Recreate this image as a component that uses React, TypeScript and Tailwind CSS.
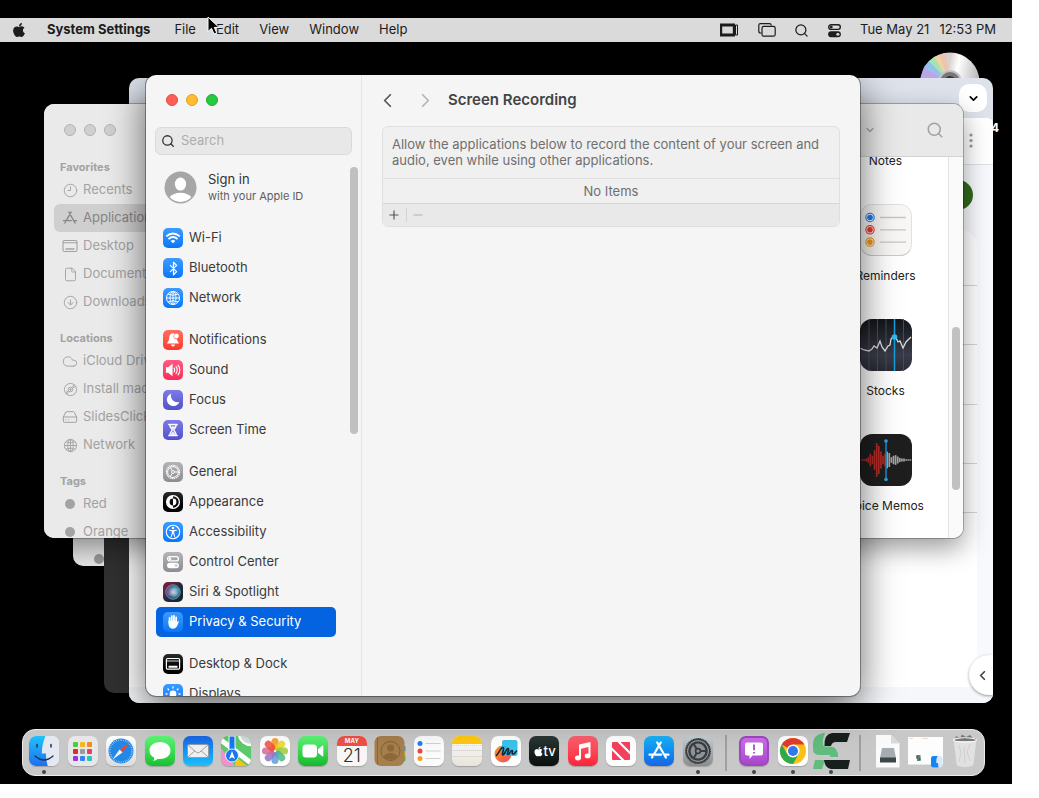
import type { ReactNode } from 'react';
import { FaApple } from 'react-icons/fa';
import {
  Bluetooth,
  ChevronDown,
  ChevronLeft,
  ChevronRight,
  CircleArrowDown,
  Clock9,
  Cloud,
  File,
  HardDrive,
  Minus,
  Plus,
  Search,
} from 'lucide-react';

type Row = { label: string; icon: ReactNode; tile?: string };

const blue = 'bg-linear-to-b from-[#3b9bff] to-[#0477f8]';
const gray = 'bg-linear-to-b from-[#b4b4b8] to-[#8c8c91]';
const black = 'bg-linear-to-b from-[#2c2c2c] to-[#000000]';
const indigo = 'bg-linear-to-b from-[#7d7be8] to-[#5350cc]';

function GlobeIcon({ size = 16, width = 1 }: { size?: number; width?: number }) {
  return (
    <svg width={size} height={size} viewBox="0 0 16 16" fill="none" stroke="currentColor" strokeWidth={width}>
      <circle cx="8" cy="8" r="6.5" />
      <ellipse cx="8" cy="8" rx="3" ry="6.5" />
      <path d="M8 1.5v13M1.5 8h13M3 4q5 2.6 10 0M3 12q5-2.6 10 0" />
    </svg>
  );
}

function ToggleIcon({ size }: { size: number }) {
  return (
    <svg width={size} height={size} viewBox="0 0 16 16" fill="none" stroke="currentColor" strokeWidth="1.5">
      <rect x="1.8" y="1.8" width="12.4" height="5" rx="2.5" />
      <circle cx="4.6" cy="4.3" r="1.5" fill="currentColor" stroke="none" />
      <rect x="1.2" y="8.9" width="13.6" height="6.2" rx="3.1" fill="currentColor" stroke="none" />
      <circle cx="11.6" cy="12" r="1.7" fill="#cfcfcf" stroke="none" />
    </svg>
  );
}

function GearIcon() {
  return (
    <svg width="16" height="16" viewBox="0 0 16 16" fill="none" stroke="white">
      <circle cx="8" cy="8" r="6.6" strokeWidth="1.2" strokeDasharray="1.4 0.67" />
      <circle cx="8" cy="8" r="5.4" strokeWidth="1" />
      <circle cx="8" cy="8" r="1.5" strokeWidth="0.9" />
      <path d="M9.5 8h4M7.2 6.7L5.3 3.4M7.2 9.3l-1.9 3.3" strokeWidth="1" />
    </svg>
  );
}

const groups: Row[][] = [
  [
    {
      label: 'Wi-Fi',
      tile: blue,
      icon: (
        <svg width="16" height="16" viewBox="0 0 16 16" fill="none" stroke="white" strokeWidth="1.9">
          <path d="M1.2 6.4Q8 .4 14.800 6.400M3.500 9Q8 5.200 12.500 9" />
          <path d="M8 13.300L5.600 10.900Q8 9 10.400 10.900Z" fill="white" stroke="none" />
        </svg>
      ),
    },
    { label: 'Bluetooth', tile: blue, icon: <Bluetooth size={15} strokeWidth={2} /> },
    { label: 'Network', tile: blue, icon: <GlobeIcon /> },
  ],
  [
    {
      label: 'Notifications',
      tile: 'bg-linear-to-b from-[#ff6d5f] to-[#fb382c]',
      icon: (
        <svg width="18" height="18" viewBox="0 0 18 18" fill="white">
          <path d="M9 2.3C6.6 2.3 5.4 4 5.3 6.3C5.2 9 4.7 10 3.3 11.7Q2.9 12.6 3.8 12.6H14.2Q15.1 12.6 14.7 11.7C13.8 10.6 13.2 9.6 13 8.2A3.1 3.1 0 0 1 10 3.4Q10.2 2.9 10.4 2.6Z" />
          <path d="M7 13.5h4a2 2 0 0 1-4 0z" />
          <circle cx="12.4" cy="5" r="2.4" />
        </svg>
      ),
    },
    {
      label: 'Sound',
      tile: 'bg-linear-to-b from-[#ff5a83] to-[#fb2a56]',
      icon: (
        <svg width="18" height="18" viewBox="0 0 18 18" fill="none" stroke="white" strokeWidth="1.1" strokeLinecap="round">
          <path d="M2.5 6.8H4.5L8 4V14L4.5 11.2H2.5Z" fill="white" />
          <path d="M10 7.2q1.4 1.8 0 3.6M12 5.7q2.5 3.3 0 6.6M14 4.2q3.7 4.8 0 9.6" />
        </svg>
      ),
    },
    {
      label: 'Focus',
      tile: indigo,
      icon: (
        <svg width="18" height="18" viewBox="0 0 18 18" fill="white">
          <path d="M7.4 2.6A6.4 6.4 0 1 0 15.3 11A6.4 6.4 0 0 1 7.4 2.6Z" />
        </svg>
      ),
    },
    {
      label: 'Screen Time',
      tile: indigo,
      icon: (
        <svg width="18" height="18" viewBox="0 0 18 18" fill="none" stroke="white" strokeWidth="1.4">
          <path d="M4.8 3.5h8.4M4.8 14.5h8.4" strokeLinecap="round" />
          <path d="M5.8 3.5C5.8 7 8.2 7.5 8.2 9S5.8 11 5.8 14.5M12.2 3.5C12.2 7 9.8 7.5 9.8 9S12.2 11 12.2 14.5" />
          <path d="M7.5 5.8h3L9 8zM7 13.5L9 11l2 2.5z" fill="white" strokeWidth="0.6" />
        </svg>
      ),
    },
  ],
  [
    { label: 'General', tile: gray, icon: <GearIcon /> },
    {
      label: 'Appearance',
      tile: black,
      icon: (
        <svg width="16" height="16" viewBox="0 0 16 16">
          <path d="M8 1.8A6.2 6.2 0 0 0 8 14.2V11.4A3.4 3.4 0 0 1 8 4.6Z" fill="white" />
          <path d="M8 4.6A3.4 3.4 0 0 1 8 11.4Z" fill="white" />
          <circle cx="8" cy="8" r="6.4" fill="none" stroke="white" strokeWidth="1.3" />
        </svg>
      ),
    },
    {
      label: 'Accessibility',
      tile: blue,
      icon: (
        <svg width="16" height="16" viewBox="0 0 16 16" fill="none" stroke="white" strokeLinecap="round">
          <circle cx="8" cy="8" r="6.7" strokeWidth="1.1" />
          <circle cx="8" cy="4" r="1.2" fill="white" stroke="none" />
          <path d="M4.7 6.3L8 6.9l3.3-.6M8 7v2M7.4 7v2.2L6.3 12.4M8.6 7v2.2l1.1 3.2" strokeWidth="1.1" />
        </svg>
      ),
    },
    { label: 'Control Center', tile: gray, icon: <ToggleIcon size={14} /> },
    {
      label: 'Siri & Spotlight',
      tile: 'bg-linear-to-br from-[#8c0f3e] via-[#27283f] to-[#05282a]',
      icon: (
        <svg width="18" height="18" viewBox="0 0 18 18">
          <defs>
            <radialGradient id="siri" cx="0.58" cy="0.52" r="0.55">
              <stop offset="0" stopColor="#ffffff" />
              <stop offset="0.3" stopColor="#a9def0" />
              <stop offset="0.65" stopColor="#3b88b0" />
              <stop offset="1" stopColor="#4c4a88" />
            </radialGradient>
          </defs>
          <path d="M2 9A7 7 0 0 1 7 2.3Q9 5 10 9L6 13Q3 12 2 9Z" fill="#e03a72" />
          <path d="M8 2Q15 3 16 9Q12 6 9 7Z" fill="#26b892" />
          <circle cx="9" cy="9" r="7.3" fill="url(#siri)" opacity="0.75" />
          <circle cx="9" cy="9" r="7.3" fill="none" stroke="#9aa8b4" strokeWidth="0.6" />
        </svg>
      ),
    },
    {
      label: 'Privacy & Security',
      tile: blue,
      icon: (
        <svg width="18" height="18" viewBox="0 0 18 18" fill="white" stroke="white" strokeLinecap="round">
          <path d="M5.6 5v5M7.8 3.2v6M10 2.8v6M12.2 4.3v6" strokeWidth="1.8" />
          <path d="M4.7 8H13V9.5L14.4 8.3Q15 8.6 14.400 9.400L12.700 13.400Q11.500 15.500 9 15.500Q4.700 15.500 4.700 10.500Z" strokeWidth="0.4" />
        </svg>
      ),
    },
  ],
  [
    {
      label: 'Desktop & Dock',
      tile: black,
      icon: (
        <svg width="16" height="16" viewBox="0 0 16 16" fill="none" stroke="white" strokeWidth="1.2">
          <rect x="1.4" y="2.5" width="13.2" height="10.6" rx="1.2" />
          <path d="M1.5 5h13" strokeWidth="0.8" />
          <path d="M3.5 10.8h9" strokeWidth="2" />
        </svg>
      ),
    },
    {
      label: 'Displays',
      tile: blue,
      icon: (
        <svg width="18" height="18" viewBox="0 0 18 18" stroke="white" strokeWidth="1.3" strokeLinecap="round">
          <circle cx="9" cy="9" r="3.4" fill="white" stroke="none" />
          <path d="M9 2v1M9 15v1M2 9h1M15 9h1M4 4l.7.7M13.3 13.3l.7.7M14 4l-.7.7M4.7 13.3l-.7.7" />
        </svg>
      ),
    },
  ],
];

const tagDot = <span className="size-2.5 rounded-full bg-[#a3a3a3]" />;

const finderGroups: { title: string; rows: (Row & { selected?: boolean })[] }[] = [
  {
    title: 'Favorites',
    rows: [
      { label: 'Recents', icon: <Clock9 size={15} strokeWidth={1.5} /> },
      {
        label: 'Applications',
        selected: true,
        icon: (
          <svg width="16" height="16" viewBox="0 0 16 16" fill="none" stroke="currentColor" strokeWidth="1.4" strokeLinecap="round">
            <path d="M9.2 2L4.2 10.7M2.9 12.9l.5-.9M6.8 2l6.3 11M1.5 10.6h7.8M12.2 10.6h2.3" />
          </svg>
        ),
      },
      {
        label: 'Desktop',
        icon: (
          <svg width="16" height="16" viewBox="0 0 16 16" fill="none" stroke="currentColor" strokeWidth="1.1">
            <rect x="1" y="2.5" width="14" height="11" rx="1.5" />
            <path d="M1 4.8h14" />
            <path d="M3.5 11h9" strokeWidth="1.7" />
          </svg>
        ),
      },
      { label: 'Documents', icon: <File size={15} strokeWidth={1.5} /> },
      { label: 'Downloads', icon: <CircleArrowDown size={15} strokeWidth={1.5} /> },
    ],
  },
  {
    title: 'Locations',
    rows: [
      { label: 'iCloud Drive', icon: <Cloud size={17} strokeWidth={1.4} /> },
      {
        label: 'Install macOS',
        icon: (
          <svg width="15" height="15" viewBox="0 0 16 16" fill="none" stroke="currentColor" strokeWidth="1">
            <circle cx="8" cy="8" r="6.5" />
            <circle cx="8" cy="8" r="2.4" />
            <circle cx="8" cy="8" r="0.7" fill="currentColor" />
            <path d="M9.600 6L12 2.800M10.200 6.800L13.300 4.300M6.400 10L4 13.200M5.800 9.200L2.700 11.700" />
          </svg>
        ),
      },
      { label: 'SlidesClicker', icon: <HardDrive size={16} strokeWidth={1.5} /> },
      { label: 'Network', icon: <GlobeIcon size={15} /> },
    ],
  },
  {
    title: 'Tags',
    rows: [
      { label: 'Red', icon: tagDot },
      { label: 'Orange', icon: tagDot },
    ],
  },
];

function MenuBar() {
  return (
    <header className="flex h-6 items-center justify-between bg-[#dadada] pr-4 pl-[11px] text-[13px] text-[#1c1c1c]">
      <nav className="flex items-center gap-5">
        <button aria-label="Apple menu">
          <FaApple size={16} />
        </button>
        <button className="mr-1 font-bold">System Settings</button>
        {['File', 'Edit', 'View', 'Window', 'Help'].map((item) => (
          <button key={item}>{item}</button>
        ))}
      </nav>
      <div className="flex items-center">
        <svg width="18" height="14" viewBox="0 0 18 14" className="mr-5">
          <path d="M0 .5H15V13.500H0Z" fill="#1c1c1c" />
          <rect x="2.200" y="3.500" width="10.600" height="7" fill="#dadada" />
          <path d="M15.500 2h2v10h-2z" fill="none" stroke="#1c1c1c" strokeWidth="1" />
        </svg>
        <svg width="18" height="14" viewBox="0 0 18 14" className="mr-[18px]" fill="none" stroke="#1c1c1c" strokeWidth="1.2">
          <path d="M3.500 10H2.500Q.8 10 .8 8.300V2.300Q.8.700 2.500.700H11.500Q13.200.700 13.300 2.500" />
          <rect x="4" y="3.400" width="13.200" height="9.800" rx="1.800" />
        </svg>
        <Search size={15} strokeWidth={2} className="mr-[18px]" />
        <div className="mr-[18px]">
          <ToggleIcon size={15} />
        </div>
        <span className="mr-2.5">Tue May 21</span>
        <span>12:53 PM</span>
      </div>
    </header>
  );
}

function FinderApp({ name, children }: { name: string; children?: ReactNode }) {
  return (
    <div className="flex h-[115px] flex-col items-center justify-end gap-3">
      {children}
      <span className="text-[12px] leading-4 text-[#222]">{name}</span>
    </div>
  );
}

const memoBars = [1, 1, 2, 4, 9, 6, 14, 24, 20, 12, 6, 9, 12, 10, 4, 6, 7, 5, 3, 2, 2, 1, 1, 1];

function FinderWindow() {
  return (
    <section
      aria-label="Finder"
      className="absolute top-[86px] left-11 flex h-[434px] w-[919px] overflow-hidden rounded-[10px] bg-white shadow-[0_0_0_1px_rgba(0,0,0,0.25),0_10px_26px_rgba(0,0,0,0.4)]"
    >
      <aside className="w-[150px] shrink-0 bg-[#eaeaea] text-[#a2a2a2]">
        <div className="flex gap-2 px-5 pt-5">
          {['Close', 'Minimize', 'Zoom'].map((label) => (
            <button key={label} aria-label={label} className="size-3 rounded-full border border-[#b3b3b3] bg-[#cfcfcf]" />
          ))}
        </div>
        <div className="pt-[22px]">
          {finderGroups.map((group) => (
            <div key={group.title} className="mb-[13px]">
              <h2 className="h-[18px] pl-4 text-[11px] leading-[18px] font-bold">{group.title}</h2>
              {group.rows.map((row) => (
                <button
                  key={row.label}
                  className={`ml-2.5 flex h-7 w-full items-center rounded-md pl-2 text-[13px] whitespace-nowrap ${
                    row.selected ? 'bg-[#cfcfcf] text-[#858585]' : ''
                  }`}
                >
                  <span className="mr-[5px] flex w-4 shrink-0 justify-center">{row.icon}</span>
                  {row.label}
                </button>
              ))}
            </div>
          ))}
        </div>
      </aside>
      <div className="flex flex-1 flex-col">
        <div className="flex h-[53px] shrink-0 items-center justify-end gap-[50px] border-b border-[#d2d2d2] bg-[#e9e9e9] pr-[19px] text-[#a2a2a2]">
          <button aria-label="Group items">
            <ChevronDown size={12} strokeWidth={2.6} />
          </button>
          <button aria-label="Search">
            <Search size={18} strokeWidth={2} />
          </button>
        </div>
        <div className="flex min-h-0 flex-1 justify-end">
          <div className="mt-[-103px] w-[125px] [clip-path:inset(103px_0_0_0)]">
            <FinderApp name="Notes" />
            <FinderApp name="Reminders">
              <svg width="52" height="52" viewBox="0 0 52 52">
                <rect x="0.500" y="0.500" width="51" height="51" rx="11" fill="#f8f7f6" stroke="#e0e0e0" />
                <path d="M2 46Q5 51.500 12 51.500H40Q47 51.500 50 46" fill="none" stroke="#c9c9c9" />
                {['#1c7cf0', '#ea3b30', '#f09a1a'].map((color, i) => (
                  <g key={color}>
                    <circle cx="10" cy={13.500 + i * 12.300} r="4.200" fill="none" stroke={color} strokeWidth="1.100" />
                    <circle cx="10" cy={13.500 + i * 12.300} r="2.800" fill={color} />
                    <path d={`M20 ${13.500 + i * 12.300}h26`} stroke="#c6c6c6" strokeWidth="1.300" />
                  </g>
                ))}
              </svg>
            </FinderApp>
            <FinderApp name="Stocks">
              <svg width="52" height="52" viewBox="0 0 52 52">
                <defs>
                  <linearGradient id="stocks" x2="0" y2="1">
                    <stop offset="0" stopColor="#14151a" />
                    <stop offset="0.700" stopColor="#393c49" />
                    <stop offset="1" stopColor="#292b34" />
                  </linearGradient>
                </defs>
                <rect width="52" height="52" rx="12" fill="url(#stocks)" />
                <path d="M9 0v52M17.500 0v52M26 0v52M43.500 0v52" stroke="#4a4c55" strokeWidth="1" />
                <path d="M34.500 0v52" stroke="#139fe0" strokeWidth="1.500" />
                <path
                  d="M0 29l4 2 5 1 3-2 2-3 3 2 3-7 2 6 3 4 3-5 2-1 1-6 3-3 2 2 2 4 2-1 3 7 3-6 5-5"
                  fill="none"
                  stroke="#dcdcdc"
                  strokeWidth="1.300"
                />
                <circle cx="34.500" cy="18" r="2.800" fill="#31b8f5" />
              </svg>
            </FinderApp>
            <FinderApp name="Voice Memos">
              <svg width="52" height="52" viewBox="0 0 52 52">
                <rect width="52" height="52" rx="12" fill="#1e1e1e" />
                {memoBars.map((h, i) => (
                  <path
                    key={i}
                    d={`M${2 + i * 2.100} ${26 - h * 0.700}v${h * 1.400}`}
                    stroke={i < 12 ? '#b32d28' : '#a4a4a4'}
                    strokeWidth="1.700"
                  />
                ))}
                <path d="M26 7v39" stroke="#188bd0" strokeWidth="1.500" />
                <circle cx="26" cy="7" r="1.800" fill="#2aa5f0" />
                <circle cx="26" cy="45.500" r="1.800" fill="#2aa5f0" />
              </svg>
            </FinderApp>
          </div>
          <div className="flex w-[15px] justify-center border-l border-[#e4e4e4] bg-[#fafafa] pt-[170px]">
            <div className="h-[163px] w-2 rounded-full bg-[#c1c1c1]" />
          </div>
        </div>
      </div>
    </section>
  );
}

function BrowserWindow() {
  return (
    <section
      aria-label="Browser"
      className="absolute top-[60px] left-[129px] flex h-[625px] w-[864px] flex-col overflow-hidden rounded-[10px] bg-[#dde2eb]"
    >
      <div className="flex h-10 shrink-0 items-center justify-end pr-1.5">
        <button aria-label="Search tabs" className="flex size-7 items-center justify-center rounded-[10px] bg-white text-black">
          <ChevronDown size={13} strokeWidth={3} />
        </button>
      </div>
      <div className="flex h-[47px] shrink-0 items-center justify-end rounded-t-md border-b border-[#dfe1e5] bg-white pr-5">
        <svg width="4" height="16" viewBox="0 0 4 16" fill="#9a9a9a">
          <circle cx="2" cy="2" r="1.600" />
          <circle cx="2" cy="7.500" r="1.600" />
          <circle cx="2" cy="13" r="1.600" />
        </svg>
      </div>
      <div className="flex flex-1 flex-col bg-[#f7f9fc]">
        <div className="flex h-[65px] justify-end pt-[15px] pr-5">
          <span className="size-[30px] rounded-full bg-[#33691e]" />
        </div>
        <div className="mr-4 flex-1 rounded-tr-2xl bg-white pt-[55px]">
          <div className="h-px bg-[#d4d4d4]" />
          <div className="mt-[58px] h-px bg-[#d4d4d4]" />
          <div className="mt-[59px] h-px bg-[#d4d4d4]" />
          <div className="mt-[58px] h-px bg-[#d4d4d4]" />
          <div className="mt-[48px] h-px bg-[#d4d4d4]" />
        </div>
        <div className="h-4 bg-[#f5f7fa]" />
      </div>
      <button
        aria-label="Show side panel"
        className="absolute right-0 bottom-2 flex h-10 w-6 items-center rounded-l-full bg-white pl-1.5 text-[#444] shadow-[0_1px_3px_rgba(0,0,0,0.4)]"
      >
        <ChevronLeft size={15} strokeWidth={2.8} />
      </button>
    </section>
  );
}

function SettingsWindow() {
  return (
    <section
      aria-label="System Settings"
      className="absolute top-[57px] left-[146px] flex h-[621px] w-[714px] overflow-hidden rounded-[10px] bg-[#f5f5f5] shadow-[0_0_0_1px_rgba(0,0,0,0.35),0_12px_38px_rgba(0,0,0,0.6)]"
    >
      <aside className="flex w-[216px] shrink-0 flex-col border-r border-[#e6e6e6]">
        <div className="flex gap-2 px-5 pt-[19px]">
          <button aria-label="Close" className="size-3 rounded-full border border-[#df4a43] bg-[#ff5f57]" />
          <button aria-label="Minimize" className="size-3 rounded-full border border-[#dea02c] bg-[#febc2e]" />
          <button aria-label="Zoom" className="size-3 rounded-full border border-[#1faa32] bg-[#28c840]" />
        </div>
        <label className="mx-[9px] mt-[21px] flex h-7 items-center gap-1.5 rounded-md border border-[#dadada] bg-[#e8e8e8] px-[5px]">
          <Search size={14} strokeWidth={2.2} className="shrink-0 text-[#333]" />
          <input
            type="search"
            aria-label="Search"
            placeholder="Search"
            className="w-full min-w-0 bg-transparent text-[13px] outline-none placeholder:text-[#adadad]"
          />
        </label>
        <div className="flex min-h-0 flex-1 justify-between pt-3 pr-[3px]">
          <div className="w-[190px] overflow-hidden pl-2.5">
            <button className="flex h-10 items-center gap-[11px] pl-2 text-left">
              <svg width="33" height="33" viewBox="0 0 32 32">
                <circle cx="16" cy="16" r="15.500" fill="#a6a6a6" />
                <ellipse cx="16" cy="12.700" rx="5.500" ry="6.300" fill="white" />
                <path d="M5.500 25.500Q9 21 16 21T26.500 25.500Q22 30 16 30T5.500 25.500Z" fill="white" />
              </svg>
              <span>
                <span className="block text-[13px] leading-[17px] text-[#333]">Sign in</span>
                <span className="block text-[11px] leading-4 text-[#5e5e5e]">with your Apple ID</span>
              </span>
            </button>
            <nav className="mt-4 flex flex-col gap-3">
              {groups.map((group, i) => (
                <div key={i}>
                  {group.map((row) => {
                    const selected = row.label === 'Privacy & Security';
                    return (
                      <button
                        key={row.label}
                        className={`flex h-[30px] w-full items-center gap-1.5 rounded-[5px] pl-[7px] text-[13px] ${
                          selected ? 'bg-[#0463e1] text-white' : 'text-[#3a3a3a]'
                        }`}
                      >
                        <span className={`flex size-5 shrink-0 items-center justify-center rounded-[5px] text-white ${row.tile}`}>
                          {row.icon}
                        </span>
                        {row.label}
                      </button>
                    );
                  })}
                </div>
              ))}
            </nav>
          </div>
          <div className="h-[267px] w-2 rounded-full bg-[#c0c0c0]" />
        </div>
      </aside>
      <main className="flex-1 px-5">
        <div className="flex h-[51px] items-center">
          <button aria-label="Back" className="mr-[15px] ml-[-6px] text-[#555]">
            <ChevronLeft size={23} strokeWidth={1.8} />
          </button>
          <button aria-label="Forward" className="mr-[11px] text-[#b4b4b4]">
            <ChevronRight size={23} strokeWidth={1.8} />
          </button>
          <h1 className="text-[15px] font-semibold text-[#444]">Screen Recording</h1>
        </div>
        <div className="overflow-hidden rounded-md border border-[#dfdfdf] bg-[#f0f0f0] text-[13px] leading-4 text-[#6f6f6f]">
          <p className="px-[9px] pt-[9px] pb-2.5">
            Allow the applications below to record the content of your screen and audio, even while using other applications.
          </p>
          <p className="border-t border-[#e0e0e0] py-1 text-center">No Items</p>
          <div className="flex h-[23px] items-center border-t border-[#d6d6d6] bg-[#e9e9e9]">
            <button aria-label="Add" className="flex w-6 border-r border-[#d4d4d4] pl-1 text-[#555]">
              <Plus size={14} strokeWidth={2} />
            </button>
            <button aria-label="Remove" className="flex w-6 pl-1 text-[#b0b0b0]">
              <Minus size={14} strokeWidth={2} />
            </button>
          </div>
        </div>
      </main>
    </section>
  );
}

function DockItem({ name, open, children }: { name: string; open?: boolean; children: ReactNode }) {
  return (
    <button aria-label={name} className="flex h-full flex-1 flex-col items-center pt-[6px]">
      <span className="flex h-[34px] items-start justify-center">{children}</span>
      {open && <span className="size-1 rounded-full bg-[#444]" />}
    </button>
  );
}

function Tile({ className, children }: { className: string; children?: ReactNode }) {
  return (
    <span
      className={`flex size-[30px] items-center justify-center overflow-hidden rounded-[7px] text-white shadow-[0_1px_1px_rgba(0,0,0,0.2)] ${className}`}
    >
      {children}
    </span>
  );
}

const launchColors = ['#46cf3e', '#f9b61a', '#f38b16', '#e5262c', '#9b9ba0', '#f43a60', '#9b37d8', '#2f86f2', '#25c9b6'];
const petals = ['#f7941d', '#e8d820', '#9fcb3b', '#52b684', '#5b9fd8', '#9475c2', '#d46a9e', '#f0503a'];

function Dock() {
  return (
    <nav
      aria-label="Dock"
      className="mt-auto mr-[27px] mb-2 ml-[22px] flex h-[47px] items-center rounded-[13px] border border-[#ececec] bg-[#c8c8c8] pl-0.5"
    >
      <DockItem name="Finder" open>
        <Tile className="bg-white">
          <svg width="30" height="30" viewBox="0 0 30 30">
            <defs>
              <linearGradient id="finder" x2="0" y2="1">
                <stop offset="0" stopColor="#1fc3fb" />
                <stop offset="1" stopColor="#1d6ff0" />
              </linearGradient>
            </defs>
            <rect width="30" height="30" fill="#e4e9f1" />
            <path d="M0 0H16.500C14 6 13 11 12.800 17.500H17C17 22 17.500 26 18.800 30H0Z" fill="url(#finder)" />
            <path d="M8 8.500v2.500M22 8.500v2.500" stroke="#1d3355" strokeWidth="1.500" strokeLinecap="round" />
            <path d="M6 20Q15 28 24 20" fill="none" stroke="#1d3355" strokeWidth="1.300" strokeLinecap="round" />
          </svg>
        </Tile>
      </DockItem>
      <DockItem name="Launchpad">
        <Tile className="bg-[#e7e7ea]">
          <span className="grid grid-cols-3 gap-0.5">
            {launchColors.map((color) => (
              <span key={color} className="size-[5px] rounded-[1px]" style={{ backgroundColor: color }} />
            ))}
          </span>
        </Tile>
      </DockItem>
      <DockItem name="Safari">
        <Tile className="bg-linear-to-b from-white to-[#dcdcdc]">
          <svg width="28" height="28" viewBox="0 0 28 28">
            <circle cx="14" cy="14" r="12.500" fill="#2188e8" />
            <circle cx="14" cy="14" r="11" fill="none" stroke="#cfe8ff" strokeWidth="1.600" strokeDasharray="0.500 1.300" />
            <path d="M22.500 5.500L12.500 12.500L15.500 15.500Z" fill="#f04438" />
            <path d="M5.500 22.500L12.500 12.500L15.500 15.500Z" fill="#f3f3f3" />
          </svg>
        </Tile>
      </DockItem>
      <DockItem name="Messages">
        <Tile className="bg-linear-to-b from-[#5df777] to-[#0fc22c]">
          <svg width="26" height="24" viewBox="0 0 26 24" fill="white">
            <path d="M13 3C6.500 3 2.500 6.800 2.500 11.500C2.500 15 4.500 17.300 7.300 18.800C7.400 20 6.800 21 6 21.800C8.200 21.800 9.800 20.800 10.800 19.800Q12 20 13 20C19.500 20 23.500 16.200 23.500 11.500S19.500 3 13 3Z" />
          </svg>
        </Tile>
      </DockItem>
      <DockItem name="Mail">
        <Tile className="bg-linear-to-b from-[#1c63e8] to-[#1dc0fa]">
          <svg width="22" height="14" viewBox="0 0 22 14" fill="#f0f0f0" stroke="#92989d" strokeWidth="0.900">
            <rect x="0.500" y="0.500" width="21" height="13" rx="1.500" />
            <path d="M1 13L8.300 6.500M21 13L13.700 6.500" />
            <path d="M1 1L9.500 8.300Q11 9.500 12.500 8.300L21 1" />
          </svg>
        </Tile>
      </DockItem>
      <DockItem name="Maps">
        <Tile className="bg-[#5dcb69]">
          <svg width="30" height="30" viewBox="0 0 30 30">
            <path d="M0 12L14 30H0Z" fill="#f291cf" />
            <path d="M15 21L26 30H14Z" fill="#fac30c" />
            <path d="M0 4L30 27" stroke="white" strokeWidth="5" />
            <path d="M18 0A13 13 0 0 0 30 9V0Z" fill="#d5dadb" />
            <path d="M18 0A13 13 0 0 0 30 9" fill="none" stroke="white" strokeWidth="2.500" />
            <path d="M8 0h6v15H8z" fill="#1778f2" stroke="white" strokeWidth="1" />
            <circle cx="11" cy="19.500" r="6.500" fill="#1778f2" stroke="#e9f4ff" strokeWidth="1" />
            <path d="M11 15L14 23L11 21.300L8 23Z" fill="white" />
          </svg>
        </Tile>
      </DockItem>
      <DockItem name="Photos">
        <Tile className="bg-white">
          <svg width="30" height="30" viewBox="0 0 30 30">
            {petals.map((color, i) => (
              <rect
                key={color}
                x="11.500"
                y="2"
                width="7"
                height="12"
                rx="3.500"
                fill={color}
                opacity="0.850"
                transform={`rotate(${i * 45} 15 15)`}
              />
            ))}
          </svg>
        </Tile>
      </DockItem>
      <DockItem name="FaceTime">
        <Tile className="bg-linear-to-b from-[#5df777] to-[#0fb92a]">
          <svg width="22" height="14" viewBox="0 0 22 14" fill="white">
            <rect x="0.500" y="0.500" width="14.500" height="13" rx="3.500" />
            <path d="M16 5.300L20.200 1.800Q21.300 1.200 21.300 2.500V11.500Q21.300 12.800 20.200 12.200L16 8.700Z" />
          </svg>
        </Tile>
      </DockItem>
      <DockItem name="Calendar">
        <Tile className="flex-col bg-[#f8f7f5]">
          <span className="h-[10px] w-full bg-[#ee5148] text-center text-[6px] leading-[10px] font-bold">MAY</span>
          <span className="text-[18px] leading-5 font-light text-[#2e2e2e]">21</span>
        </Tile>
      </DockItem>
      <DockItem name="Contacts">
        <svg width="32" height="30" viewBox="0 0 32 30">
          <path d="M29 10h2.500v5H29z" fill="#2f9de2" />
          <path d="M29 15h2.500v5H29z" fill="#f4a91f" />
          <path d="M29 20h2.500v5H29z" fill="#56b948" />
          <rect x="0.500" width="30" height="30" rx="6.500" fill="#a67f4c" />
          <path d="M3.500 1v28" stroke="#876437" strokeWidth="0.900" />
          <g fill="#8c693c">
            <circle cx="16.500" cy="15" r="9.500" fill="none" stroke="#80602f" />
            <circle cx="16.500" cy="12" r="3.600" />
            <path d="M9.500 21Q11 17 16.500 17T23.500 21Q20.500 23.700 16.500 23.700T9.500 21Z" />
          </g>
        </svg>
      </DockItem>
      <DockItem name="Reminders">
        <Tile className="bg-[#fbfbfb]">
          <svg width="30" height="30" viewBox="0 0 30 30">
            {['#1f7df5', '#ec463b', '#f29d27'].map((color, i) => (
              <g key={color}>
                <circle cx="6" cy={7.500 + i * 7.500} r="2.500" fill={color} />
                <path d={`M11.500 ${7.500 + i * 7.500}h15`} stroke="#d1d1d1" strokeWidth="1" />
              </g>
            ))}
          </svg>
        </Tile>
      </DockItem>
      <DockItem name="Notes">
        <Tile className="bg-linear-to-b from-white to-[#e8e3da]">
          <svg width="30" height="30" viewBox="0 0 30 30">
            <path d="M0 0h30v8H0z" fill="#fdc913" />
            <path d="M0 9.500h30" stroke="#bbb" strokeDasharray="1 1" strokeWidth="0.500" />
            <path d="M0 14.500h30M0 20.500h30" stroke="#d3d0ca" strokeWidth="0.700" />
          </svg>
        </Tile>
      </DockItem>
      <DockItem name="Freeform">
        <Tile className="bg-white">
          <svg width="30" height="30" viewBox="0 0 30 30">
            <defs>
              <linearGradient id="freeform" x2="1" y2="1">
                <stop offset="0" stopColor="#f99b24" />
                <stop offset="1" stopColor="#f64a55" />
              </linearGradient>
            </defs>
            <circle cx="12" cy="18" r="8.500" fill="url(#freeform)" />
            <rect x="11" y="4" width="15.500" height="16" rx="2" fill="#26bdea" opacity="0.900" />
            <path
              d="M5.500 19.500C8 17 10 11 12 11.500S10 19 12 19S15 12 17 12.500S15 18.500 17 18.500S19.500 14 21 14.500S20 18 22 18S24 16.500 25.500 15"
              fill="none"
              stroke="#15263b"
              strokeWidth="1.600"
              strokeLinecap="round"
            />
          </svg>
        </Tile>
      </DockItem>
      <DockItem name="TV">
        <Tile className="bg-linear-to-b from-[#2a3835] to-[#0b100f]">
          <FaApple size={11} />
          <span className="text-[13px] leading-4 font-medium">tv</span>
        </Tile>
      </DockItem>
      <DockItem name="Music">
        <Tile className="bg-linear-to-b from-[#fc5f71] to-[#fa2137]">
          <svg width="22" height="24" viewBox="0 0 22 24" fill="white">
            <path d="M7 5.500L18.500 3V16.500H16.500V8L9 9.700V19H7Z" />
            <ellipse cx="6" cy="19" rx="3" ry="2.400" />
            <ellipse cx="15.600" cy="16.900" rx="2.900" ry="2.400" />
          </svg>
        </Tile>
      </DockItem>
      <DockItem name="News">
        <Tile className="bg-white">
          <svg width="18" height="18" viewBox="0 0 18 18">
            <rect width="18" height="18" rx="1" fill="#f63f5c" />
            <path d="M6 -1L19 12M-1 6L12 19" stroke="white" strokeWidth="2.200" />
          </svg>
        </Tile>
      </DockItem>
      <DockItem name="App Store">
        <Tile className="bg-linear-to-b from-[#1bb2f8] to-[#1766e4]">
          <svg width="24" height="24" viewBox="0 0 24 24" fill="none" stroke="white" strokeWidth="2.200" strokeLinecap="round">
            <path d="M13.800 3.500L6.800 15.500M5 18.500l.5-.8M10.200 3.500l8.700 15M2.500 15.700h11.500M18.500 15.700h3" />
          </svg>
        </Tile>
      </DockItem>
      <DockItem name="System Settings" open>
        <Tile className="bg-linear-to-b from-[#c5d0d8] to-[#8b8c8d]">
          <svg width="28" height="28" viewBox="0 0 28 28" fill="none" stroke="#3b3d40">
            <circle cx="14" cy="14" r="12" fill="#8e9499" strokeWidth="2" strokeDasharray="1.200 0.500" />
            <circle cx="14" cy="14" r="11.600" strokeWidth="1.200" />
            <circle cx="14" cy="14" r="8.600" strokeWidth="2.400" />
            <circle cx="14" cy="14" r="2.400" strokeWidth="1.600" />
            <path d="M16.500 14h6M12.700 12L9.500 6.500M12.700 16L9.500 21.500" strokeWidth="2" />
          </svg>
        </Tile>
      </DockItem>
      <div className="mx-2 h-9 w-0.5 bg-[#a0a0a0]" />
      <DockItem name="Feedback Assistant" open>
        <Tile className="border-2 border-[#a146c2] bg-linear-to-b from-[#cd6fea] to-[#a847cb]">
          <svg width="20" height="20" viewBox="0 0 20 20">
            <path d="M3 1.500H17Q19 1.500 19 3.500V12.500Q19 14.500 17 14.500H8.500L5.500 18V14.500H3Q1 14.500 1 12.500V3.500Q1 1.500 3 1.500Z" fill="white" />
            <path d="M10 3.500V9.300M10 11v1.600" stroke="#a345c7" strokeWidth="1.700" />
          </svg>
        </Tile>
      </DockItem>
      <DockItem name="Chrome" open>
        <Tile className="bg-white">
          <svg width="28" height="28" viewBox="0 0 28 28">
            <circle cx="14" cy="14" r="13" fill="#fbc116" />
            <path d="M14 14L2.740 7.500A13 13 0 0 1 25.260 7.500H14Z" fill="#e33b2e" />
            <path d="M2.740 7.500A13 13 0 0 0 14 27L19.630 17.250L14 14L8.370 17.250Z" fill="#2da94f" />
            <circle cx="14" cy="14" r="6.500" fill="white" />
            <circle cx="14" cy="14" r="5" fill="#3378ec" />
          </svg>
        </Tile>
      </DockItem>
      <DockItem name="SlidesClicker" open>
        <svg width="38" height="36" viewBox="0 0 38 36" className="mt-[-3px]">
          <path d="M13 0H11Q1 2 1 11V16Q1 22 8 22H18V24H26Q26 14 18 13.500H12Q10 11 11 6Z" fill="#62bc7e" />
          <path d="M20 14Q25 14 26 24H20Z" fill="#62bc7e" />
          <path d="M3 27H13L10 36H1Z" fill="#62bc7e" />
          <path d="M38 0H20Q12 1 12.500 13H19Q20 9 24 9H35Z" fill="#18201e" />
          <path d="M12 27H38L36 36H19Q13 35 12 27Z" fill="#18201e" />
        </svg>
      </DockItem>
      <div className="mx-2 h-9 w-0.5 bg-[#a0a0a0]" />
      <DockItem name="Disk image">
        <svg width="24" height="34" viewBox="0 0 24 34" className="mt-[-2px]">
          <path d="M0 1H15L23.500 9.500V33.500H0Z" fill="#fafafa" />
          <path d="M15 1V9.500H23.500Z" fill="#d9d9d9" />
          <path d="M6 14H18L20 24H4Z" fill="#a5adb2" />
          <path d="M4 23.500H20V28.500H4Z" fill="#3e4549" />
        </svg>
      </DockItem>
      <DockItem name="Minimized window">
        <svg width="36" height="32" viewBox="0 0 36 32">
          <path d="M0 1h35v27.500H0z" fill="#fdfdfd" />
          <path d="M1 2.500h4M14 2.500h6" stroke="#e9dcc8" />
          <path d="M12.500 20H9V22H12V24H9" fill="none" stroke="#2a5a3e" strokeWidth="1.300" />
          <rect x="23" y="20" width="11.500" height="11.500" rx="2.500" fill="#dbe7f6" />
          <path d="M25.500 20H29.500Q28 23 28.300 27H30L30.500 31.500H25.500Q23 31.500 23 29V22.500Q23 20 25.500 20Z" fill="#1685f4" />
        </svg>
      </DockItem>
      <DockItem name="Trash">
        <svg width="26" height="34" viewBox="0 0 26 34" className="mt-[-2px]">
          <path d="M1.500 5L4.500 30Q5 33 13 33T21.500 30L24.500 5Z" fill="#e3e3e3" opacity="0.900" />
          <path d="M2 7L4 2L8 4L10 0.500L14 3L18 1L21 4L24 4V7Z" fill="#77797a" />
          <path d="M7 4l3 1M17 3l3 2" stroke="#bb5545" strokeWidth="1.300" />
          <path d="M11 4l3 1" stroke="#38726e" strokeWidth="1.500" />
          <ellipse cx="13" cy="6" rx="11.500" ry="2.200" fill="none" stroke="#f6f6f6" strokeWidth="1.100" />
          <path d="M7 11l2 8-2 9M18 10l-3 8 3 9M12 13l1 16" stroke="#cacaca" fill="none" strokeWidth="0.800" />
        </svg>
      </DockItem>
    </nav>
  );
}

export default function App() {
  return (
    <div className="flex h-screen bg-white pr-[27px] pb-[14px] font-[Inter,'Liberation_Sans',sans-serif]">
      <div className="relative flex flex-1 flex-col overflow-hidden bg-black pt-[18px]">
        <MenuBar />
        <div className="absolute inset-x-0 top-[18px]">
          {/* Desktop disc and its label */}
          <svg width="60" height="60" viewBox="0 0 60 60" className="absolute top-[34px] left-[920px]">
            <defs>
              <linearGradient id="disc" x2="1" y2="0.200">
                <stop offset="0" stopColor="#d4d4d4" />
                <stop offset="0.500" stopColor="#d9d0cb" />
                <stop offset="0.650" stopColor="#ffffff" />
                <stop offset="1" stopColor="#bdbdbd" />
              </linearGradient>
            </defs>
            <circle cx="30" cy="30" r="29.500" fill="url(#disc)" />
            <path d="M30 30L0 27L4 15Z" fill="#b9a6e8" />
            <path d="M30 30L4 15L9 9Z" fill="#8fc3ee" />
            <path d="M30 30L9 9L14 5Z" fill="#a5e3b0" />
            <path d="M30 30L14 5L19 3Z" fill="#efd3a0" />
            <path d="M30 30L19 3L25 1Z" fill="#efc3ad" />
            <circle cx="30" cy="30" r="11" fill="#777" stroke="#c3c3c3" strokeWidth="2" />
            <circle cx="30" cy="30" r="6" fill="#333" />
          </svg>
          <span className="absolute top-[102px] left-[991px] text-[12px] leading-4 font-bold text-white">4</span>

          {/* Windows from back to front */}
          <div className="absolute top-[114px] left-[73px] h-[434px] w-[200px] rounded-[10px] bg-[#e6e6e6]">
            <span className="absolute bottom-0.5 left-[21px] size-2.5 rounded-full bg-[#989898]" />
          </div>
          <div className="absolute top-[300px] left-[104px] h-[375px] w-[200px] rounded-[10px] bg-[#303030]" />
          <BrowserWindow />
          <FinderWindow />
          <SettingsWindow />
        </div>
        <Dock />
        <svg width="14" height="20" viewBox="0 0 14 20" className="absolute top-4 left-[207px]">
          <path d="M1 1V15.500L4.500 12.300L7 18L9.700 16.800L7.300 11.400H12Z" fill="black" stroke="white" strokeWidth="1" />
        </svg>
      </div>
    </div>
  );
}
